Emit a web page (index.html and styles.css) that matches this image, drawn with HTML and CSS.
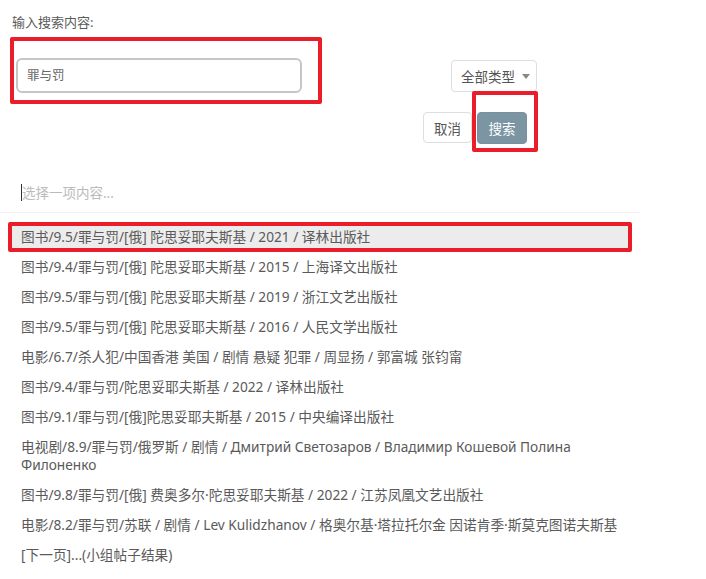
FILE: index.html
```html
<!DOCTYPE html>
<html lang="zh-CN">
<head>
<meta charset="utf-8">
<title>搜索</title>
<link rel="stylesheet" href="styles.css">
</head>
<body>
<div class="top">
  <div class="left">
    <div class="label">输入搜索内容:</div>
    <div class="mark mark-input">
      <div class="query">罪与罚</div>
    </div>
  </div>
  <div class="right">
    <div class="select">全部类型<span class="caret"></span></div>
    <div class="actions">
      <button class="btn btn-cancel">取消</button>
      <div class="mark mark-btn">
        <button class="btn btn-search">搜索</button>
      </div>
    </div>
  </div>
</div>

<div class="panel">
  <div class="filter"><span class="cursor"></span><span class="placeholder">选择一项内容...</span></div>
  <ul class="list">
    <li class="item active">图书/9.5/罪与罚/[俄] 陀思妥耶夫斯基 / 2021 / 译林出版社</li>
    <li class="item">图书/9.4/罪与罚/[俄] 陀思妥耶夫斯基 / 2015 / 上海译文出版社</li>
    <li class="item">图书/9.5/罪与罚/[俄] 陀思妥耶夫斯基 / 2019 / 浙江文艺出版社</li>
    <li class="item">图书/9.5/罪与罚/[俄] 陀思妥耶夫斯基 / 2016 / 人民文学出版社</li>
    <li class="item">电影/6.7/杀人犯/中国香港 美国 / 剧情 悬疑 犯罪 / 周显扬 / 郭富城 张钧甯</li>
    <li class="item">图书/9.4/罪与罚/陀思妥耶夫斯基 / 2022 / 译林出版社</li>
    <li class="item">图书/9.1/罪与罚/[俄]陀思妥耶夫斯基 / 2015 / 中央编译出版社</li>
    <li class="item">电视剧/8.9/罪与罚/俄罗斯 / 剧情 / Дмитрий Светозаров / Владимир Кошевой Полина Филоненко</li>
    <li class="item">图书/9.8/罪与罚/[俄] 费奥多尔·陀思妥耶夫斯基 / 2022 / 江苏凤凰文艺出版社</li>
    <li class="item">电影/8.2/罪与罚/苏联 / 剧情 / Lev Kulidzhanov / 格奥尔基·塔拉托尔金 因诺肯季·斯莫克图诺夫斯基</li>
    <li class="item">[下一页]...(小组帖子结果)</li>
  </ul>
</div>
</body>
</html>
```

FILE: styles.css
```css
* { box-sizing: border-box; }
html, body { margin: 0; padding: 0; background: #fff; }
body {
  font-family: "Noto Sans", "Noto Sans CJK SC", sans-serif;
  font-size: 13px;
  color: #555;
  width: 706px;
  height: 579px;
  overflow: hidden;
}

.top {
  display: flex;
  width: 538px;
  padding-left: 10px;
}
.left { width: 312px; }
.label {
  padding: 12px 0 0 2px;
  line-height: 20px;
  color: #5a5a5a;
}
.mark {
  border: 4px solid #ea1d2a;
  border-radius: 2px;
}
.mark-input {
  margin-top: 5px;
  width: 312px;
  height: 67px;
  padding: 17px 0 0 2px;
}
.query {
  width: 286px;
  height: 35px;
  border: 2px solid #c6c6c6;
  border-radius: 6px;
  padding-left: 9px;
  line-height: 31px;
  font-size: 12.5px;
  color: #666;
}

.right {
  margin-left: auto;
  display: flex;
  flex-direction: column;
  align-items: flex-end;
  padding-top: 60px;
}
.select {
  width: 86px;
  height: 32px;
  margin-right: 1px;
  border: 1px solid #dedede;
  border-radius: 4px;
  display: flex;
  align-items: center;
  padding-left: 9px;
  font-size: 13.5px;
  color: #555;
}
.caret {
  margin-left: 7px;
  width: 0;
  height: 0;
  border-left: 4px solid transparent;
  border-right: 4px solid transparent;
  border-top: 5px solid #888;
}
.actions {
  display: flex;
  align-items: flex-start;
  margin-top: -1px;
}
.btn {
  font-family: inherit;
  font-size: 13.5px;
  border-radius: 4px;
  padding: 0;
  margin: 0;
}
.btn-cancel {
  margin-top: 21px;
  width: 49px;
  height: 31px;
  background: #fff;
  border: 1px solid #dedede;
  color: #555;
}
.mark-btn {
  width: 66px;
  height: 61px;
  padding: 17px 0 0 1px;
}
.btn-search {
  width: 50px;
  height: 32px;
  background: #7b95a3;
  border: 1px solid #7890a0;
  color: #fff;
}

.panel {
  margin-top: 18px;
  width: 640px;
  height: 420px;
  border-radius: 4px;
  box-shadow: 0 0 1px rgba(0, 0, 0, 0.06);
}
.filter {
  height: 43px;
  border-bottom: 1px solid #f0f0f0;
  display: flex;
  align-items: center;
  padding: 2px 0 0 21px;
  font-size: 13.5px;
}
.cursor {
  width: 1px;
  height: 17px;
  background: #333;
}
.placeholder { color: #bbb; }

.list {
  list-style: none;
  margin: 0;
  padding: 9px 8px 0;
}
.item {
  padding: 6px 13px;
  line-height: 18px;
  font-size: 13.7px;
  color: #5a5a5a;
}
.item.active {
  border: 4px solid #ea1d2a;
  border-radius: 2px;
  padding: 2px 9px;
  background: #ececec;
}
```
